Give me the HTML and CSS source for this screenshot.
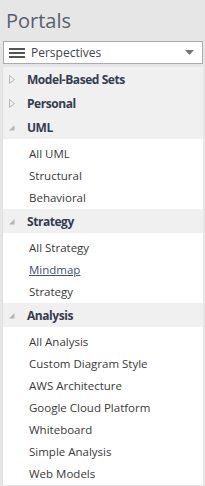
FILE: index.html
```html
<!DOCTYPE html>
<html>
<head>
<meta charset="utf-8">
<link rel="stylesheet" href="styles.css">
</head>
<body>
<div class="app">
  <h1 class="title">Portals</h1>
  <div class="select">
    <svg class="menu" width="16" height="12" viewBox="0 0 16 12"><rect x="0" y="1" width="16" height="2" fill="#555"/><rect x="0" y="5" width="16" height="2" fill="#555"/><rect x="0" y="9" width="16" height="2" fill="#555"/></svg>
    <span class="select-label">Perspectives</span>
    <svg class="caret" width="9" height="6" viewBox="0 0 9 6"><path d="M0 0H9L4.5 5Z" fill="#777"/></svg>
  </div>
  <div class="tree">
    <div class="head"><svg class="tri" width="6" height="9" viewBox="0 0 6 9"><path d="M0.5 0.5V8.5L5.5 4.5Z" fill="none" stroke="#b5b5b5"/></svg><span>Model-Based Sets</span></div>
    <div class="head"><svg class="tri" width="6" height="9" viewBox="0 0 6 9"><path d="M0.5 0.5V8.5L5.5 4.5Z" fill="none" stroke="#b5b5b5"/></svg><span>Personal</span></div>
    <div class="head"><svg class="tri" width="6" height="9" viewBox="0 0 6 9"><path d="M5.5 2V7.5H0Z" fill="#b5b5b5"/></svg><span>UML</span></div>
    <div class="items">
      <div class="item">All UML</div>
      <div class="item">Structural</div>
      <div class="item">Behavioral</div>
    </div>
    <div class="head"><svg class="tri" width="6" height="9" viewBox="0 0 6 9"><path d="M5.5 2V7.5H0Z" fill="#b5b5b5"/></svg><span>Strategy</span></div>
    <div class="items">
      <div class="item">All Strategy</div>
      <div class="item link">Mindmap</div>
      <div class="item">Strategy</div>
    </div>
    <div class="head"><svg class="tri" width="6" height="9" viewBox="0 0 6 9"><path d="M5.5 2V7.5H0Z" fill="#b5b5b5"/></svg><span>Analysis</span></div>
    <div class="items">
      <div class="item">All Analysis</div>
      <div class="item">Custom Diagram Style</div>
      <div class="item">AWS Architecture</div>
      <div class="item">Google Cloud Platform</div>
      <div class="item">Whiteboard</div>
      <div class="item">Simple Analysis</div>
      <div class="item">Web Models</div>
    </div>
  </div>
</div>
</body>
</html>
```
FILE: styles.css
```css
html, body {
  margin: 0;
  padding: 0;
  background: #e6e6e6;
  font-family: "Open Sans", "Noto Sans", sans-serif;
}
.app {
  width: 205px;
  height: 486px;
  display: flex;
  flex-direction: column;
}
.title {
  margin: 0;
  padding: 8px 0 0 6px;
  height: 41px;
  box-sizing: border-box;
  font-size: 20px;
  font-weight: 400;
  line-height: 26px;
  color: #56606e;
}
.select {
  margin: 0 2px 0 3px;
  height: 23px;
  box-sizing: border-box;
  border: 1px solid #ababab;
  background: #fff;
  display: flex;
  align-items: center;
  padding: 0 8px 0 5px;
}
.menu { flex: none; }
.select-label {
  margin-left: 6px;
  flex: 1;
  font-size: 12px;
  color: #3f4350;
}
.caret { flex: none; }
.tree {
  margin: 3px 2px 0 2px;
  background: #fff;
  border-left: 1px solid #e0e0e0;
  display: flex;
  flex-direction: column;
}
.head {
  height: 24px;
  background: #f0f0f0;
  display: flex;
  align-items: center;
  padding-left: 6px;
  font-size: 12px;
  font-weight: 700;
  letter-spacing: -0.45px;
  color: #363c50;
}
.head .tri {
  flex: none;
  margin-right: 12px;
}
.items {
  padding: 4px 0 0 0;
}
.item {
  height: 22px;
  line-height: 22px;
  padding-left: 26px;
  font-size: 11.5px;
  color: #3a3a3a;
}
.item.link {
  color: #3e4e78;
  text-decoration: underline;
}
```
